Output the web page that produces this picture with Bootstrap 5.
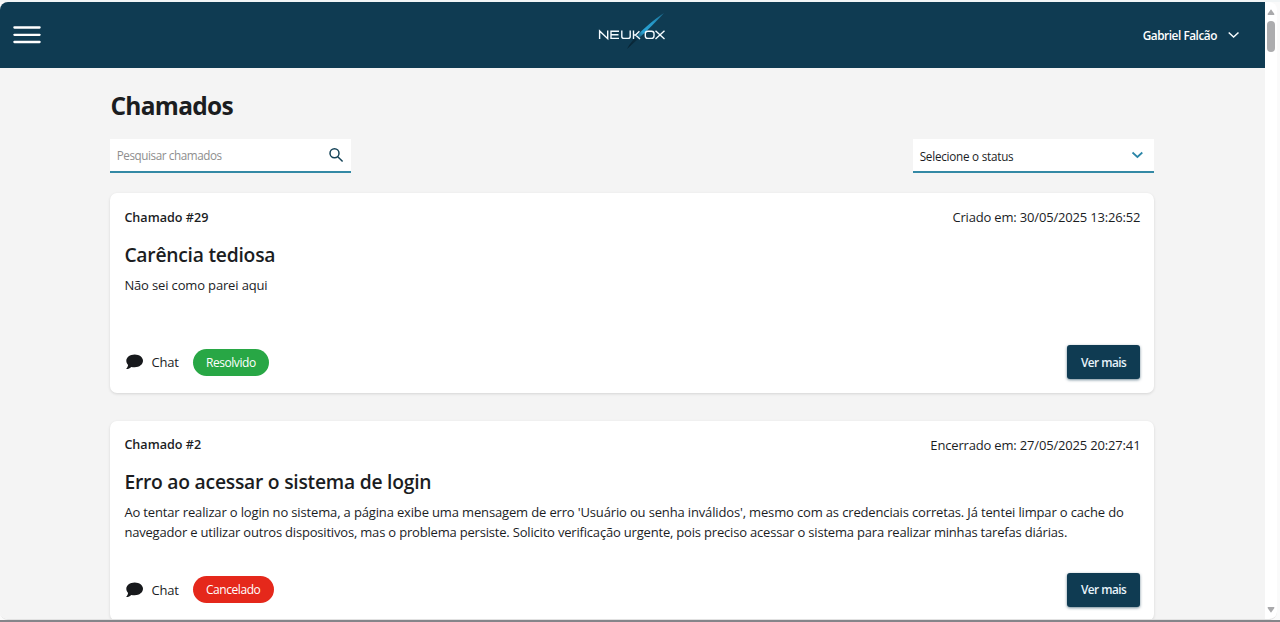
<!DOCTYPE html>
<html lang="pt-BR">
<head>
<meta charset="utf-8">
<meta name="viewport" content="width=device-width, initial-scale=1">
<title>Chamados</title>
<link href="https://cdn.jsdelivr.net/npm/bootstrap@5.3.0/dist/css/bootstrap.min.css" rel="stylesheet">
<style>
body{font-family:"Open Sans","Noto Sans",sans-serif;font-size:13px;line-height:20px;color:#1b1d1f;background:#fafafa;height:622px;overflow:hidden;border-top:2px solid #f1f5f6;border-bottom:2px solid #85858a}
.shell{height:618px;border-radius:8px;border-bottom:1px solid #e2e2e2;background:#fff;margin-right:3px}
.page{background:#f4f4f4}
.topbar{height:66px;background:#0f3b52;color:#fff;padding:0 24px 0 13px}
.side{flex:1 1 0}
.burger{width:28px;height:18px;display:block}
.brand{margin:0 -12px 4px 0}
.user{font-size:11.8px;font-weight:600;letter-spacing:-.45px;padding-bottom:1px}
.wrap{width:1044px;margin:0 auto 0 110.4px}
h1{font-size:24.5px;line-height:30px;font-weight:700;margin:22.5px 0 18.5px;letter-spacing:-.7px}
.field{width:241px;height:34px;background:#fff;border-bottom:2px solid #3489a5;padding:0 7px 0 6.3px}
.field input{font-size:11.7px;letter-spacing:-.42px;color:#1b1d1f}
.field input::placeholder{color:#8e8e8e;opacity:1}
.status{font-size:11.7px;letter-spacing:-.24px;padding-top:2px}
.ticket{height:200px;border-radius:7px;box-shadow:0 1px 3px rgba(0,0,0,.13);padding:14px;margin-bottom:27.5px}
.ticket:first-of-type{margin-top:20.2px}
.num{font-weight:600;font-size:12.6px;padding-top:.5px}
.date{letter-spacing:-.17px}
.desc{letter-spacing:-.19px}
.desc span{letter-spacing:-.15px}
.chat{letter-spacing:-.2px;margin-left:7px}
.ticket h2{font-size:19.3px;line-height:24px;font-weight:600;margin:15px 0 8px;letter-spacing:-.24px}
.pill{height:27px;border-radius:14px;color:#fff;font-size:12px;letter-spacing:-.43px;padding:1px 13.3px 0;margin-left:14px}
.ok{background:#28a745}.off{background:#e5281b}
.more{height:34px;width:73.5px;border-radius:3px;background:#0f3b52;color:#e8f3fb;font-size:11.8px;font-weight:600;letter-spacing:-.5px;padding:1px 0 0;box-shadow:0 1px 3px rgba(15,59,82,.6)}
.scroll{width:12px}
.thumb{width:8px;height:31px;border-radius:4px;background:#acacae}
</style>
</head>
<body>
<div class="shell d-flex overflow-hidden">
  <div class="page flex-grow-1 overflow-hidden">
    <header class="topbar d-flex align-items-center">
      <div class="side">
        <svg class="burger" viewBox="0 0 28 18"><path d="M1.4 1.5H26.6M1.4 8.8H26.6M1.4 16H26.6" stroke="#fff" stroke-width="2.3" stroke-linecap="round"/></svg>
      </div>
      <svg class="brand" width="72" height="40" viewBox="0 0 72 40" fill="none">
        <defs><linearGradient id="beam" x1="30" y1="36" x2="67" y2="0" gradientUnits="userSpaceOnUse"><stop stop-color="#06202f"/><stop offset=".25" stop-color="#0a2c3f"/><stop offset=".45" stop-color="#27a2d4"/><stop offset=".72" stop-color="#2597c7"/><stop offset="1" stop-color="#1b6c8f"/></linearGradient></defs>
        <path d="M30 36C33 29.500 45 15 67 0C57 11 44 23.500 30 36Z" fill="url(#beam)"/>
        <g stroke="#f5fbff" stroke-width="1.4"><path d="M2.6 26V18L10.7 25.7V17.5M22 18.3H14V25.4H22M14 21.8H21.5M24.8 17.5V23.5Q24.8 25.4 27 25.4H31Q33.2 25.4 33.2 23.5V17.5M36.500 17.5V26M36.800 22H38.500L42.400 18.200M38.500 22L43 26M50.7 18.2H54.5Q57 18.2 57 20.5V23Q57 25.4 54.5 25.4H50.7Q48.3 25.4 48.3 23V20.5Q48.3 18.2 50.7 18.2ZM58.5 17.7L67.5 26M67.5 17.7L58.5 26"/></g>
      </svg>
      <div class="side d-flex justify-content-end align-items-center">
        <span class="user">Gabriel Falcão</span>
        <svg class="ms-2" width="16" height="10" viewBox="0 0 16 10" fill="none"><path d="M3.7 2.5L8.6 7L13.5 2.5" stroke="#f6fbfd" stroke-width="1.5"/></svg>
      </div>
    </header>
    <main class="wrap">
      <h1>Chamados</h1>
      <div class="d-flex justify-content-between">
        <div class="field d-flex align-items-center justify-content-between">
          <input class="border-0 p-0 bg-transparent" type="text" placeholder="Pesquisar chamados" aria-label="Pesquisar chamados">
          <svg width="16" height="16" viewBox="0 0 16 16" fill="none" stroke="#164459" stroke-width="1.5"><circle cx="6.5" cy="6.3" r="4.5"/><path d="M9.8 9.8L14.6 14.5"/></svg>
        </div>
        <div class="field d-flex align-items-center justify-content-between">
          <span class="status">Selecione o status</span>
          <svg width="20" height="12" viewBox="0 0 20 12" fill="none"><path d="M5.5 3.5L10.4 8L15.3 3.5" stroke="#2b86a8" stroke-width="1.7"/></svg>
        </div>
      </div>
      <article class="ticket card border-0">
        <div class="d-flex justify-content-between"><span class="num">Chamado #29</span><span class="date">Criado em: 30/05/2025 13:26:52</span></div>
        <h2>Carência tediosa</h2>
        <p class="desc mb-0"><span>Não sei como parei aqui</span></p>
        <div class="d-flex align-items-center mt-auto">
          <svg width="20" height="18" viewBox="0 0 20 18"><path d="M10.7 1.4C6 1.4 2.3 4.2 2.3 7.8C2.3 9.4 3 10.8 4.1 11.9C3.9 13.6 2.6 15.3 2 16.1C4.2 16.2 6.2 14.9 7.3 13.9C8.4 14.2 9.5 14.3 10.7 14.3C15.4 14.3 19 11.4 19 7.8C19 4.2 15.4 1.4 10.7 1.4Z" fill="#17191c"/></svg>
          <span class="chat">Chat</span><span class="pill ok d-flex align-items-center">Resolvido</span>
          <button class="btn more border-0 ms-auto" type="button">Ver mais</button>
        </div>
      </article>
      <article class="ticket card border-0">
        <div class="d-flex justify-content-between"><span class="num">Chamado #2</span><span class="date">Encerrado em: 27/05/2025 20:27:41</span></div>
        <h2>Erro ao acessar o sistema de login</h2>
        <p class="desc mb-0"><span>Ao tentar realizar o login no sistema, a página exibe uma mensagem de erro 'Usuário ou senha inválidos', mesmo com as credenciais corretas. Já tentei limpar o cache do</span><br>navegador e utilizar outros dispositivos, mas o problema persiste. Solicito verificação urgente, pois preciso acessar o sistema para realizar minhas tarefas diárias.</p>
        <div class="d-flex align-items-center mt-auto">
          <svg width="20" height="18" viewBox="0 0 20 18"><path d="M10.7 1.4C6 1.4 2.3 4.2 2.3 7.8C2.3 9.4 3 10.8 4.1 11.9C3.9 13.6 2.6 15.3 2 16.1C4.2 16.2 6.2 14.9 7.3 13.9C8.4 14.2 9.5 14.3 10.7 14.3C15.4 14.3 19 11.4 19 7.8C19 4.2 15.4 1.4 10.7 1.4Z" fill="#17191c"/></svg>
          <span class="chat">Chat</span><span class="pill off d-flex align-items-center">Cancelado</span>
          <button class="btn more border-0 ms-auto" type="button">Ver mais</button>
        </div>
      </article>
    </main>
  </div>
  <div class="scroll d-flex flex-column align-items-center">
    <svg width="10" height="8" viewBox="0 0 10 8" style="margin:6px 0 5px"><path d="M5 1.2L8.4 6Q8.6 7 7.6 7H2.4Q1.4 7 1.6 6Z" fill="#a9a9ab"/></svg>
    <div class="thumb"></div>
    <svg class="mt-auto" width="10" height="8" viewBox="0 0 10 8" style="margin-bottom:5px"><path d="M5 6.8L8.4 2Q8.6 1 7.6 1H2.4Q1.4 1 1.6 2Z" fill="#a9a9ab"/></svg>
  </div>
</div>
<script src="https://cdn.jsdelivr.net/npm/bootstrap@5.3.0/dist/js/bootstrap.bundle.min.js"></script>
</body>
</html>
